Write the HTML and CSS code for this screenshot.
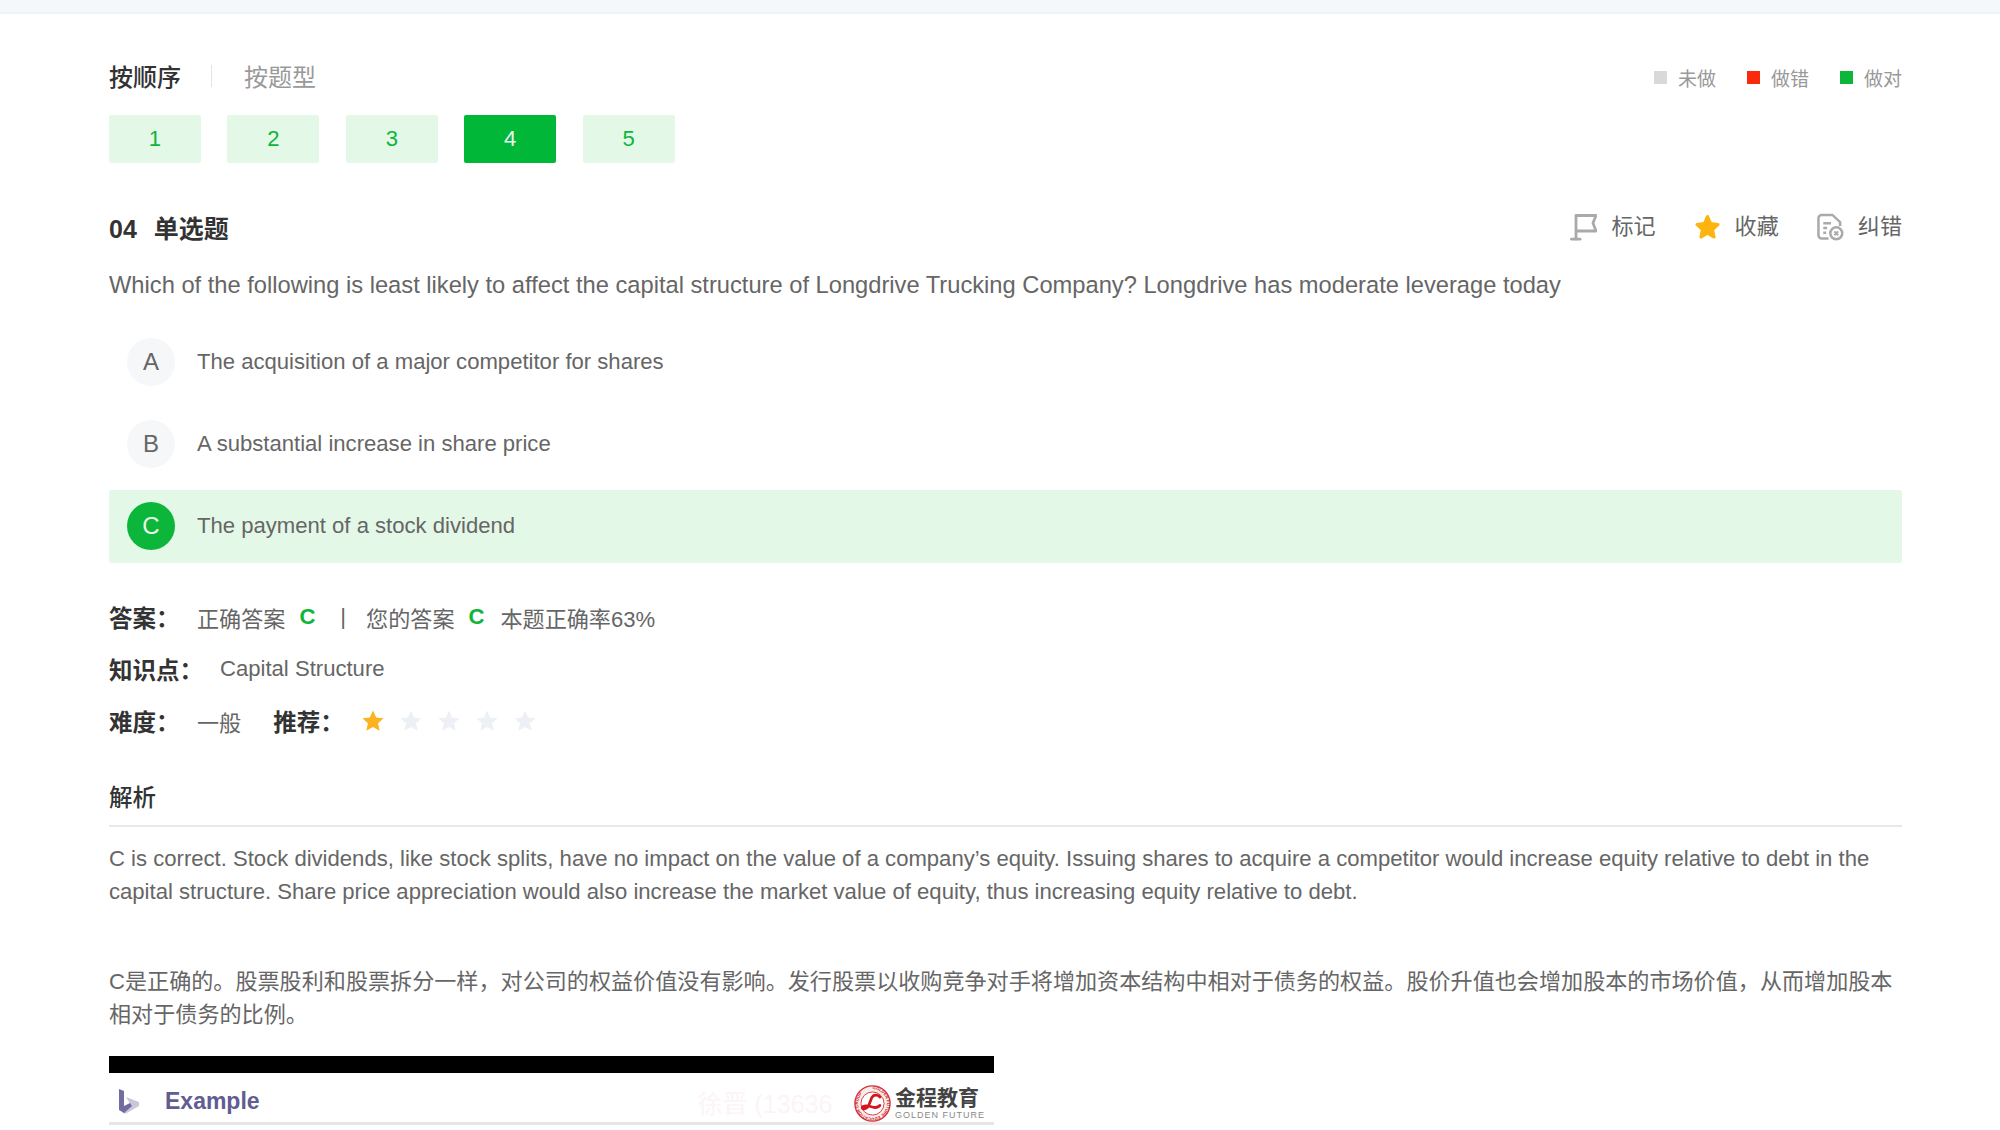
FILE: index.html
```html
<!DOCTYPE html>
<html lang="zh-CN">

<head>
    <meta charset="UTF-8">
    <title>单选题</title>
    <link rel="stylesheet" href="styles.css">
</head>

<body>
    <div class="topbar"></div>

    <div class="page">
        <div class="nav-row">
            <div class="tabs">
                <span class="tab active">按顺序</span>
                <span class="tab-line"></span>
                <span class="tab">按题型</span>
            </div>
            <div class="legend">
                <span class="legend-item"><i class="dot gray"></i>未做</span>
                <span class="legend-item"><i class="dot red"></i>做错</span>
                <span class="legend-item"><i class="dot green"></i>做对</span>
            </div>
        </div>

        <div class="numbers">
            <a class="num">1</a>
            <a class="num">2</a>
            <a class="num">3</a>
            <a class="num current">4</a>
            <a class="num">5</a>
        </div>

        <div class="q-head">
            <h3><span class="q-no">04</span>单选题</h3>
            <div class="actions">
                <span class="action">
                    <svg width="27" height="28" viewBox="0 0 27 28" fill="none" stroke="#aaa" stroke-width="2.800" stroke-linejoin="round" stroke-linecap="round">
                        <path d="M6 26V2.500H26L23 10L26 18H6"/>
                        <path d="M1.500 26.200H10"/>
                    </svg>
                    标记
                </span>
                <span class="action">
                    <svg width="27" height="28" viewBox="0 0 28 28">
                        <path fill="#fdb40f" stroke="#fdb40f" stroke-width="3" stroke-linejoin="round" d="M14 3l3.400 7.400 7.600 1-5.700 5.300 1.600 7.800L14 20.600 7.100 24.500l1.600-7.800L3 11.400l7.600-1z"/>
                    </svg>
                    收藏
                </span>
                <span class="action">
                    <svg width="27" height="28" viewBox="0 0 28 28" fill="none" stroke="#aaa" stroke-width="2.600">
                        <path d="M12 26H5a3.500 3.500 0 0 1-3.500-3.500V5A3.500 3.500 0 0 1 5 1.500h11l8 7.500v4"/>
                        <path d="M6.500 10h8M6.500 15h4M6.500 20h3"/>
                        <circle cx="20" cy="20.500" r="6.200"/>
                        <path d="M18 18.500l4 4M22 18.500l-4 4" stroke-width="2"/>
                    </svg>
                    纠错
                </span>
            </div>
        </div>

        <p class="question">Which of the following is least likely to affect the capital structure of Longdrive Trucking Company? Longdrive has moderate leverage today</p>

        <div class="options">
            <div class="option"><span class="letter">A</span>The acquisition of a major competitor for shares</div>
            <div class="option"><span class="letter">B</span>A substantial increase in share price</div>
            <div class="option right"><span class="letter">C</span>The payment of a stock dividend</div>
        </div>

        <div class="info">
            <div class="info-row">
                <b class="label">答案：</b>
                <span>正确答案</span>
                <b class="answer">C</b>
                <span class="bar">|</span>
                <span>您的答案</span>
                <b class="answer">C</b>
                <span>本题正确率63%</span>
            </div>
            <div class="info-row">
                <b class="label wide">知识点：</b>
                <span>Capital Structure</span>
            </div>
            <div class="info-row">
                <b class="label">难度：</b>
                <span class="level">一般</span>
                <b class="label short">推荐：</b>
                <span class="stars">
                    <svg width="24" height="24" viewBox="0 0 24 24"><path class="on" d="M12 1.500l3.200 7 7.300.8-5.400 5 1.500 7.400-6.600-3.700-6.600 3.700 1.500-7.400-5.400-5 7.300-.8z"/></svg>
                    <svg width="24" height="24" viewBox="0 0 24 24"><path class="off" d="M12 1.500l3.200 7 7.300.8-5.400 5 1.500 7.400-6.600-3.700-6.600 3.700 1.500-7.400-5.400-5 7.300-.8z"/></svg>
                    <svg width="24" height="24" viewBox="0 0 24 24"><path class="off" d="M12 1.500l3.200 7 7.300.8-5.400 5 1.500 7.400-6.600-3.700-6.600 3.700 1.500-7.400-5.400-5 7.300-.8z"/></svg>
                    <svg width="24" height="24" viewBox="0 0 24 24"><path class="off" d="M12 1.500l3.200 7 7.300.8-5.400 5 1.500 7.400-6.600-3.700-6.600 3.700 1.500-7.400-5.400-5 7.300-.8z"/></svg>
                    <svg width="24" height="24" viewBox="0 0 24 24"><path class="off" d="M12 1.500l3.200 7 7.300.8-5.400 5 1.500 7.400-6.600-3.700-6.600 3.700 1.500-7.400-5.400-5 7.300-.8z"/></svg>
                </span>
            </div>
        </div>

        <h4 class="analysis-title">解析</h4>
        <div class="analysis">
            <p>C is correct. Stock dividends, like stock splits, have no impact on the value of a company’s equity. Issuing shares to acquire a competitor would increase equity relative to debt in the capital structure. Share price appreciation would also increase the market value of equity, thus increasing equity relative to debt.</p>
            <p>C是正确的。股票股利和股票拆分一样，对公司的权益价值没有影响。发行股票以收购竞争对手将增加资本结构中相对于债务的权益。股价升值也会增加股本的市场价值，从而增加股本相对于债务的比例。</p>
        </div>

        <div class="slide">
            <div class="slide-black"></div>
            <div class="slide-head">
                <svg class="slide-icon" width="24" height="28" viewBox="0 0 24 28">
                    <path fill="#c9c7db" d="M9 9l13 5v4L8 26l-3-2 9-6-2-4z"/>
                    <path fill="#716d9f" d="M2 1l5 2v15l6-3 2 3-8 7-5-3z"/>
                </svg>
                <span class="slide-title">Example</span>
                <span class="watermark">徐晋 (13636</span>
                <div class="brand">
                    <svg width="37" height="37" viewBox="0 0 40 40" fill="none">
                        <defs>
                            <path id="ringPath" d="M20 4.500a15.500 15.500 0 1 1-.01 0"/>
                        </defs>
                        <circle cx="20" cy="20" r="19" fill="#fbeaea" stroke="#d8333a" stroke-width="1.500"/>
                        <text class="ring-text"><textPath href="#ringPath">GOLDEN FUTURE EDUCATION GROUP</textPath></text>
                        <circle cx="20" cy="20" r="12.500" fill="#fff" stroke="#d8333a" stroke-width="1"/>
                        <path d="M28 13c-2-3-7-3-9 1l-3 8c-1 3-6 5-7 3s4-3 8-2 8 3 11-1" stroke="#d4151c" stroke-width="3" stroke-linecap="round"/>
                    </svg>
                    <div class="brand-text">
                        <div class="brand-cn">金程教育</div>
                        <div class="brand-en">GOLDEN FUTURE</div>
                    </div>
                </div>
            </div>
        </div>
    </div>
</body>

</html>
```

FILE: styles.css
```css
* {
    box-sizing: border-box;
}

html,
body {
    margin: 0;
    height: 1130px;
    overflow: hidden;
    background: #fff;
}

body {
    font-family: "Liberation Sans", "Noto Sans CJK SC", sans-serif;
    font-size: 22.1px;
    color: #666;
}

.topbar {
    height: 14px;
    background: #f5f8fb;
    border-bottom: 2px solid #eef2f6;
}

.page {
    padding: 46px 98px 0 109px;
}

/* tabs + legend */
.nav-row {
    display: flex;
    justify-content: space-between;
    align-items: center;
    height: 34px;
}

.tabs {
    display: flex;
    align-items: center;
    margin-bottom: 4px;
}

.tab {
    font-size: 24px;
    color: #999;
}

.tab.active {
    color: #333;
    font-weight: 500;
}

.tab-line {
    width: 1px;
    height: 22px;
    margin: 2px 32px 0 30px;
    background: #e3e3e3;
}

.legend {
    display: flex;
    gap: 31px;
    font-size: 19px;
    color: #999;
}

.legend-item {
    display: flex;
    align-items: center;
}

.dot {
    width: 13px;
    height: 13px;
    margin-right: 11px;
}

.gray {
    background: #d9d9d9;
}

.red {
    background: #fa2a0d;
}

.green {
    background: #0cb63a;
}

/* question numbers */
.numbers {
    display: flex;
    gap: 26.4px;
    margin-top: 21px;
}

.num {
    width: 92px;
    height: 48px;
    line-height: 48px;
    text-align: center;
    border-radius: 2px;
    background: #e4f8e8;
    color: #0cb63a;
}

.num.current {
    background: #00b738;
    color: #e8f8ec;
}

.q-head {
    display: flex;
    justify-content: space-between;
    align-items: center;
    margin-top: 46px;
    height: 36px;
}

h3 {
    margin: 0;
    font-size: 25px;
    font-weight: bold;
    color: #333;
}

.q-no {
    margin-right: 17px;
}

.actions {
    display: flex;
    gap: 38px;
    margin-bottom: 7px;
}

.action {
    display: flex;
    align-items: center;
    gap: 14px;
    color: #666;
}

.action svg {
    margin-top: 6px;
}

.question {
    margin: 23px 0 0;
    font-size: 23.7px;
    line-height: 34px;
}

/* options */
.options {
    display: flex;
    flex-direction: column;
    gap: 9px;
    margin-top: 24px;
}

.option {
    display: flex;
    align-items: center;
    height: 73px;
    padding: 0 0 2px 18px;
    border-radius: 2px;
    color: #666;
}

.letter {
    width: 48px;
    height: 48px;
    margin-right: 22px;
    line-height: 48px;
    text-align: center;
    font-size: 24px;
    border-radius: 50%;
    background: #f5f7f9;
}

.option.right {
    background: #e4f8e8;
}

.option.right .letter {
    background: #0cb63a;
    color: #e8f8ec;
}

/* answer info */
.info {
    margin-top: 28px;
}

.info-row {
    display: flex;
    align-items: center;
    height: 52px;
}

.label {
    width: 88px;
    font-size: 23.5px;
    color: #333;
}

.label.wide {
    width: 111px;
}

.label.short {
    width: 90px;
    margin-left: 32px;
}

.answer {
    margin: 0 16px 0 14px;
    color: #0cb63a;
}

.bar {
    margin: 0 20px 0 9px;
}

.stars {
    display: flex;
    gap: 14px;
    margin-left: -2px;
}

.on {
    fill: #fbb31f;
}

.off {
    fill: #edf0f5;
}

/* analysis */
.analysis-title {
    margin: 34px 0 0;
    padding-bottom: 10px;
    font-size: 23.5px;
    line-height: 34px;
    font-weight: 500;
    color: #333;
    border-bottom: 2px solid #e8e8e8;
}

.analysis {
    margin-top: 15px;
    line-height: 33px;
}

.analysis p {
    margin: 0 0 57px;
}

/* slide image at the bottom */
.slide {
    width: 885px;
    margin-top: -32px;
    position: relative;
}

.slide-black {
    height: 17px;
    background: #000;
}

.slide-head {
    display: flex;
    align-items: center;
    height: 52px;
    padding: 8px 0 0 8px;
    border-bottom: 3px solid #e6e6e6;
}

.slide-icon {
    margin-right: 24px;
}

.slide-title {
    font-size: 23px;
    font-weight: bold;
    color: #615c92;
}

.watermark {
    margin-left: 438px;
    font-size: 25px;
    color: #fcf5f5;
    white-space: nowrap;
}

/* logo on the right of the slide head */
.brand {
    position: absolute;
    right: 9px;
    bottom: 3px;
    display: flex;
    align-items: center;
    gap: 4px;
    background: #fff;
}

.ring-text {
    font-size: 4.5px;
    font-weight: bold;
    fill: #c9252c;
}

.brand-cn {
    font-size: 21px;
    line-height: 24px;
    font-weight: bold;
    color: #444;
}

.brand-en {
    font-size: 9px;
    line-height: 11px;
    color: #888;
    letter-spacing: 1px;
}
```
